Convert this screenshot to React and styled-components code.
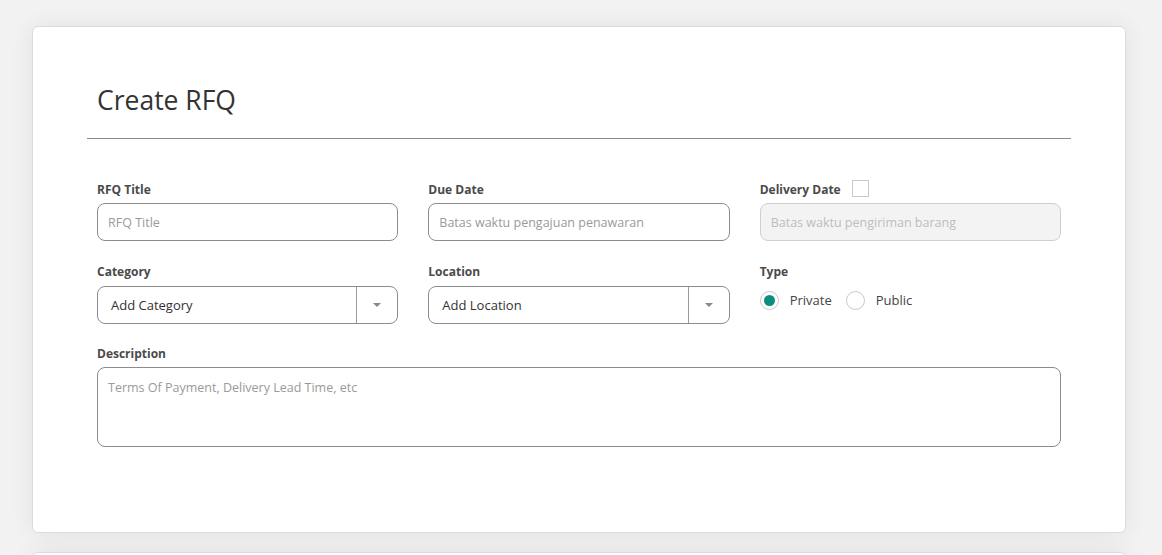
import React from 'react'
import styled, { createGlobalStyle } from 'styled-components';

const GlobalStyle = createGlobalStyle`
  body {
    margin: 0;
    background: #f2f2f2;
    font-family: "Open Sans", "Noto Sans", sans-serif;
    color: #444;
  }
`;

const Page = styled.div`
  padding: 26px 36px 0 32px;
  display: flex;
  flex-direction: column;
  gap: 19px;
  height: 555px;
  overflow: hidden;
  box-sizing: border-box;
`;

const Card = styled.div`
  background: #fff;
  border: 1px solid #dcdcdc;
  border-radius: 6px;
  box-shadow: 0 0 24px rgba(0, 0, 0, 0.07);
  padding: ${p => p.$empty ? '0' : '56px 54px 85px'};
  min-height: ${p => p.$empty ? '200px' : 'auto'};
  flex-shrink: 0;
`;

const Title = styled.h1`
  margin: 0 10px;
  font-size: 26.5px;
  line-height: 34px;
  font-weight: 400;
  color: #333;
`;

const Divider = styled.hr`
  margin: 21px 0 42px;
  border: none;
  border-top: 1px solid #8a8a8a;
`;

const Form = styled.div`
  padding: 0 10px;
  display: grid;
  grid-template-columns: repeat(3, 1fr);
  column-gap: 30px;
  row-gap: 22px;
`;

const Field = styled.div`
  display: flex;
  flex-direction: column;
  gap: 6px;
  grid-column: ${p => p.$wide ? '1 / -1' : 'auto'};
  margin-top: ${p => p.$wide ? '-1px' : '0'};
`;

const Label = styled.label`
  display: flex;
  align-items: center;
  gap: 11px;
  height: 16px;
  font-size: 12px;
  font-weight: 700;
  color: #4a4a4a;
`;

const Checkbox = styled.span`
  width: 15px;
  height: 15px;
  margin-top: -2px;
  border: 1px solid #c8c8c8;
  background: #fff;
`;

const Input = styled.input`
  height: 38px;
  box-sizing: border-box;
  border: 1px solid ${p => p.disabled ? '#cfcfcf' : '#8c8c8c'};
  border-radius: 8px;
  background: ${p => p.disabled ? '#f3f3f3' : '#fff'};
  padding: 0 10px;
  font-family: inherit;
  font-size: 12.5px;
  color: #444;
  outline: none;
  &::placeholder {
    color: ${p => p.disabled ? '#bdbdbd' : '#9a9a9a'};
  }
`;

const Select = styled.div`
  height: 38px;
  margin-top: 1px;
  box-sizing: border-box;
  border: 1px solid #8c8c8c;
  border-radius: 8px;
  display: flex;
  align-items: stretch;
  font-size: 13px;
  color: #333;
`;

const SelectValue = styled.div`
  flex: 1;
  display: flex;
  align-items: center;
  padding-left: 13px;
`;

const SelectToggle = styled.div`
  width: 40px;
  border-left: 1px solid #9a9a9a;
  display: flex;
  align-items: center;
  justify-content: center;
  &::after {
    content: '';
    border-left: 4px solid transparent;
    border-right: 4px solid transparent;
    border-top: 4px solid #888;
  }
`;

const RadioGroup = styled.div`
  display: flex;
  align-items: center;
  height: 26px;
  margin-top: 2px;
  gap: 14px;
`;

const RadioOption = styled.div`
  display: flex;
  align-items: center;
  gap: 11px;
  font-size: 13px;
  color: #444;
`;

const RadioCircle = styled.span`
  width: 19px;
  height: 19px;
  box-sizing: border-box;
  border-radius: 50%;
  border: 1px solid #c8c8c8;
  display: flex;
  align-items: center;
  justify-content: center;
  &::after {
    content: '';
    width: 11px;
    height: 11px;
    border-radius: 50%;
    background: ${p => p.$checked ? '#0a8f7e' : 'transparent'};
  }
`;

const TextArea = styled.textarea`
  height: 80px;
  box-sizing: border-box;
  border: 1px solid #8c8c8c;
  border-radius: 8px;
  padding: 11px 10px;
  font-family: inherit;
  font-size: 12.5px;
  resize: none;
  outline: none;
  &::placeholder {
    color: #9a9a9a;
  }
`;

export default function App() {
  return (
    <>
      <GlobalStyle />
      <Page>
        <Card>
          <Title>Create RFQ</Title>
          <Divider />
          <Form>
            <Field>
              <Label>RFQ Title</Label>
              <Input placeholder="RFQ Title" />
            </Field>
            <Field>
              <Label>Due Date</Label>
              <Input placeholder="Batas waktu pengajuan penawaran" />
            </Field>
            <Field>
              <Label>Delivery Date <Checkbox /></Label>
              <Input disabled placeholder="Batas waktu pengiriman barang" />
            </Field>
            <Field>
              <Label>Category</Label>
              <Select>
                <SelectValue>Add Category</SelectValue>
                <SelectToggle />
              </Select>
            </Field>
            <Field>
              <Label>Location</Label>
              <Select>
                <SelectValue>Add Location</SelectValue>
                <SelectToggle />
              </Select>
            </Field>
            <Field>
              <Label>Type</Label>
              <RadioGroup>
                <RadioOption><RadioCircle $checked />Private</RadioOption>
                <RadioOption><RadioCircle />Public</RadioOption>
              </RadioGroup>
            </Field>
            <Field $wide>
              <Label>Description</Label>
              <TextArea placeholder="Terms Of Payment, Delivery Lead Time, etc" />
            </Field>
          </Form>
        </Card>
        <Card $empty />
      </Page>
    </>
  )
}
